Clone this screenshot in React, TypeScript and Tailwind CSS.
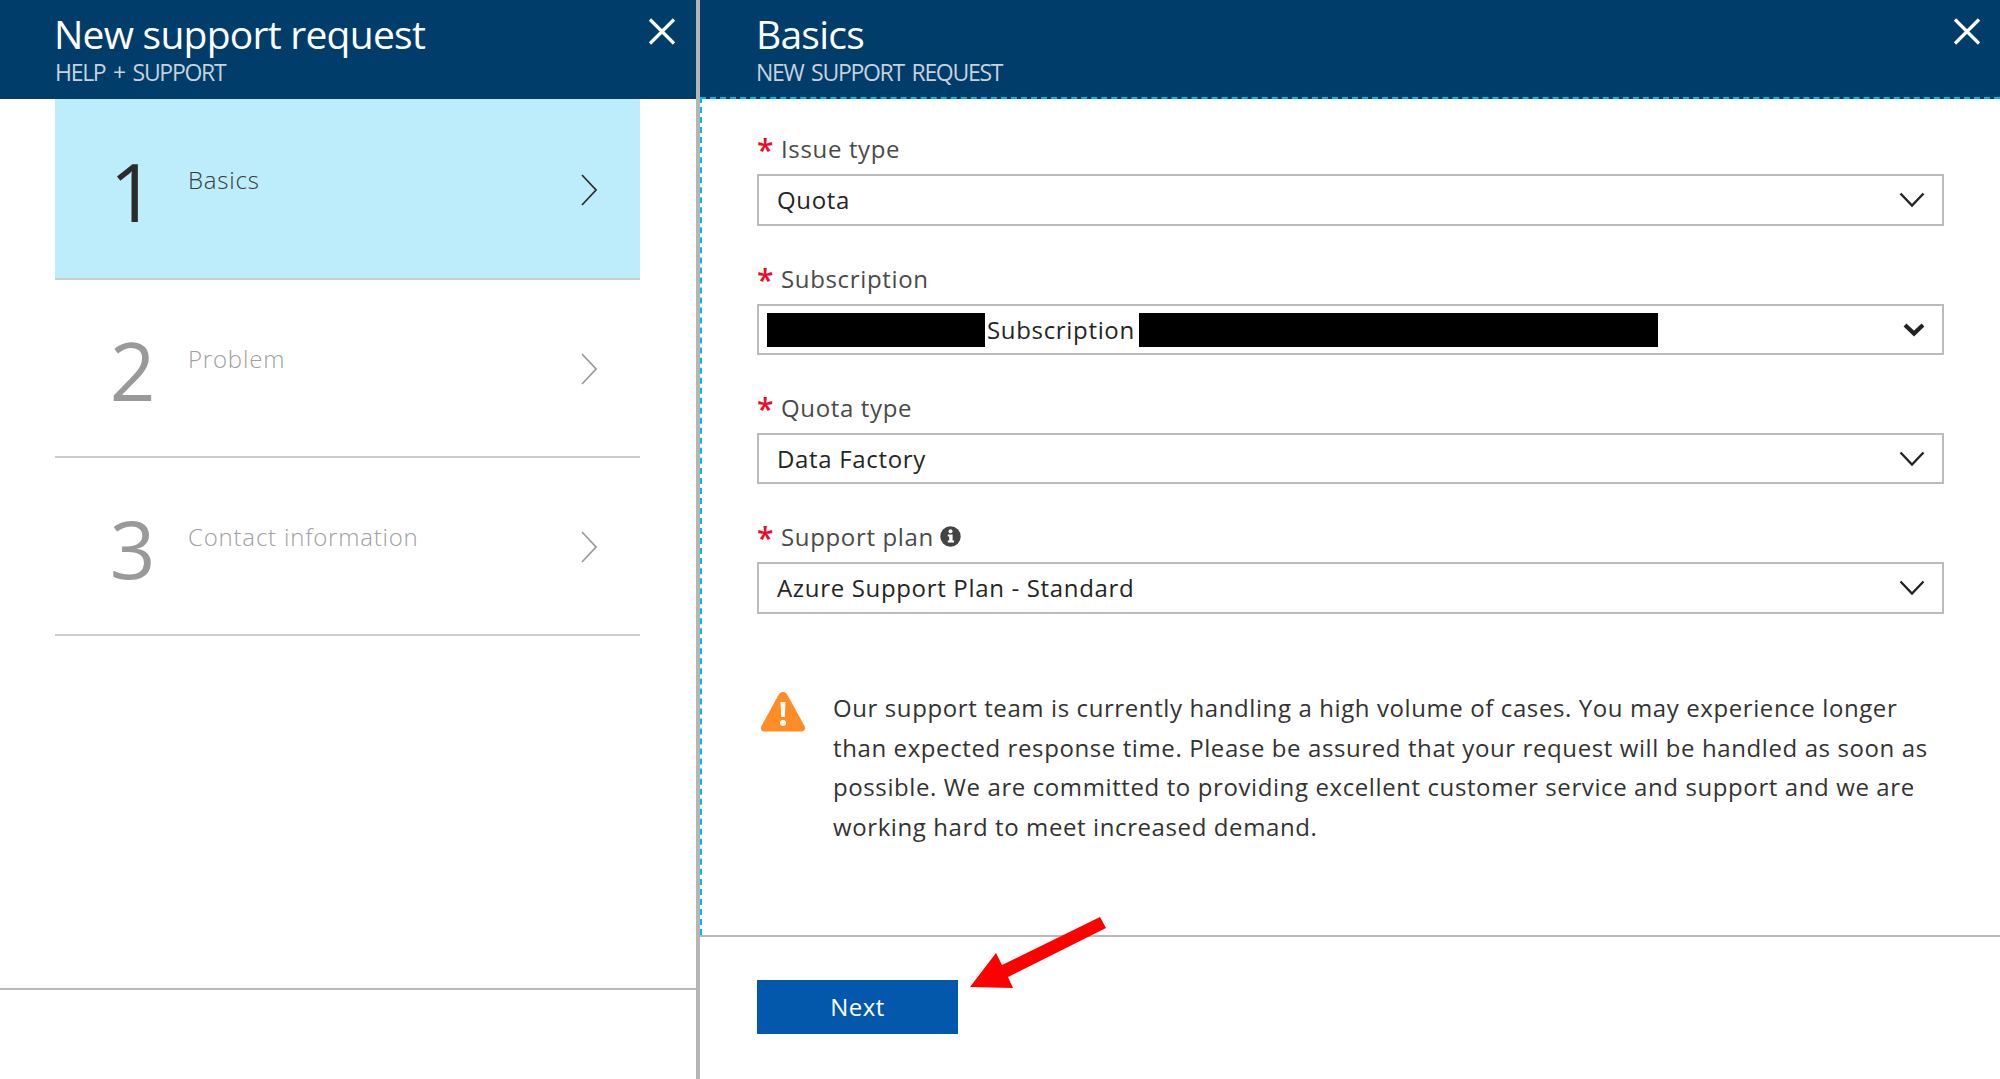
import React from "react";

const font = { fontFamily: '"Open Sans", "Noto Sans", sans-serif' };

function CloseIcon() {
  return (
    <svg width="28" height="27" viewBox="0 0 28 27" className="block">
      <path d="M2 1.500 L26 25.500 M26 1.500 L2 25.500" stroke="#ffffff" strokeWidth="3.2" fill="none" />
    </svg>
  );
}

function Header({ title, sub, narrow }: { title: string; sub: string; narrow?: boolean }) {
  return (
    <div className="relative h-[99px] shrink-0 bg-[#003d6b] text-white">
      <div className={`absolute top-[7px] ${narrow ? "left-[56px]" : "left-[54px]"} whitespace-nowrap text-[39px] leading-[54px] tracking-[-0.75px] font-normal`}>{title}</div>
      <div className={`absolute top-[56px] ${narrow ? "left-[56px]" : "left-[55px]"} whitespace-nowrap text-[23px] leading-[32px] tracking-[-1.3px] [word-spacing:3px] text-[#c6d2dc]`}>{sub}</div>
    </div>
  );
}

function Step({ n, label, active }: { n: string; label: string; active?: boolean }) {
  const c = active ? "#2b2b2b" : "#999999";
  return (
    <div className={`relative border-b-2 border-[#cccccc] ${active ? "h-[181px] bg-[#bdedfb]" : "h-[178px]"}`}>
      <div className="flex h-full">
        <div className="w-[31px] shrink-0" />
        <div className={`w-[93px] shrink-0 text-center text-[80px] leading-[100px] font-normal ${active ? "pt-[42px]" : "pt-[40px]"}`} style={{ color: c }}>{n}</div>
        <div className="w-[9px] shrink-0" />
        <div className={`flex-1 text-[24px] leading-[34px] tracking-[0.8px] font-light ${active ? "pt-[64px] text-[#3a3a3a]" : "pt-[62px] text-[#a0a0a0]"}`}>{label}</div>
        <div className={`w-[59px] shrink-0 ${active ? "pt-[75px]" : "pt-[73px]"}`}>
          <svg width="16" height="32" viewBox="0 0 16 32">
            <path d="M1 1 L15 16 L1 31" fill="none" stroke={c} strokeWidth="1.7" />
          </svg>
        </div>
      </div>
    </div>
  );
}

function Chevron({ bold }: { bold?: boolean }) {
  return bold ? (
    <svg width="22" height="15" viewBox="0 0 22 15">
      <path d="M2 3 L11 11.500 L20 3" fill="none" stroke="#222222" strokeWidth="4.2" />
    </svg>
  ) : (
    <svg width="26" height="16" viewBox="0 0 26 16">
      <path d="M1.500 1.500 L13 13.500 L24.500 1.500" fill="none" stroke="#222222" strokeWidth="2.3" />
    </svg>
  );
}

function Field({ label, children, info, bold, outer }: { label: string; children: React.ReactNode; info?: boolean; bold?: boolean; outer: string }) {
  return (
    <div className={outer}>
      <div className="mb-[7px] flex h-[36px] items-center">
        <span className="h-[28px] w-[24px] shrink-0 text-[30px] leading-[30px] text-[#ea0b2c] font-semibold">*</span>
        <span className="text-[24px] tracking-[0.65px] text-[#4a4a4a]">{label}</span>
        {info && (
          <svg width="21" height="21" viewBox="0 0 21 21" className="-mt-[2px] ml-[6px]">
            <circle cx="10.500" cy="10.500" r="10.200" fill="#444444" />
            <circle cx="10.500" cy="5.200" r="2" fill="#ffffff" />
            <path d="M7.800 8.500 H12.600 V14.600 H14 V16.600 H7.800 V14.600 H9.200 V10.500 H7.800 Z" fill="#ffffff" />
          </svg>
        )}
      </div>
      <div className="flex h-[calc(100%-43px)] items-center border-2 border-[#bbbbbb] pr-[17px]">
        <div className="flex flex-1 items-center whitespace-nowrap text-[24px] tracking-[0.67px] text-[#252525]">{children}</div>
        <Chevron bold={bold} />
      </div>
    </div>
  );
}

export default function App() {
  return (
    <div className="relative flex h-[1079px] w-[2000px] overflow-hidden bg-white" style={font}>
      {/* Left blade */}
      <div className="flex w-[696px] shrink-0 flex-col">
        <div className="relative">
          <Header title="New support request" sub="HELP + SUPPORT" />
          <div className="absolute right-[20px] top-[18px]"><CloseIcon /></div>
        </div>
        <div className="flex-1 pl-[55px] pr-[56px]">
          <Step n="1" label="Basics" active />
          <Step n="2" label="Problem" />
          <Step n="3" label="Contact information" />
        </div>
        <div className="h-[91px] shrink-0 border-t-2 border-[#b9b9b9]" />
      </div>

      <div className="w-[4px] shrink-0 bg-[#b5b5b5]" />

      {/* Right blade */}
      <div className="flex flex-1 flex-col">
        <div className="relative">
          <Header title="Basics" sub="NEW SUPPORT REQUEST" narrow />
          <div className="absolute right-[19px] top-[18px]"><CloseIcon /></div>
        </div>
        <div className="relative z-10 -mt-[2px] flex-1 border-l-2 border-t-2 border-dashed border-[#00b7f1] pl-[55px] pr-[56px] pt-[32px]">
          <Field label="Issue type" outer="mb-[35px] h-[95px]">
            <span className="pl-[18px]">Quota</span>
          </Field>
          <Field label="Subscription" bold outer="mb-[35px] h-[94px]">
            <div className="ml-[8px] h-[34px] w-[218px] bg-black" />
            <span className="ml-[2px] mr-[5px] w-[147px]">Subscription</span>
            <div className="h-[34px] w-[519px] bg-black" />
          </Field>
          <Field label="Quota type" outer="mb-[35px] h-[94px]">
            <span className="pl-[18px]">Data Factory</span>
          </Field>
          <Field label="Support plan" info outer="mb-[74px] h-[95px]">
            <span className="pl-[18px]">Azure Support Plan - Standard</span>
          </Field>
          <div className="flex pl-[3px]">
            <svg width="46" height="41" viewBox="0 0 46 41" className="mt-[3px] shrink-0">
              <path d="M23 1 C20.500 1 19.500 2.500 18.500 4 L1.500 35 C0 38 1.500 40.500 4.500 40.500 H41.500 C44.500 40.500 46 38 44.500 35 L27.500 4 C26.500 2.500 25.500 1 23 1 Z" fill="#ff8c26" />
              <path d="M20.500 11 H25.500 L24.800 26 H21.200 Z" fill="#ffffff" />
              <circle cx="23" cy="32" r="3" fill="#ffffff" />
            </svg>
            <p className="ml-[27px] whitespace-nowrap text-[24px] leading-[39.5px] tracking-[0.6px] text-[#333333]">
              Our support team is currently handling a high volume of cases. You may experience longer
              <br />
              than expected response time. Please be assured that your request will be handled as soon as
              <br />
              possible. We are committed to providing excellent customer service and support and we are
              <br />
              working hard to meet increased demand.
            </p>
          </div>
        </div>
        <div className="h-[144px] shrink-0 border-t-2 border-[#b9b9b9] pl-[57px] pt-[43px]">
          <div className="flex h-[54px] w-[201px] items-center justify-center bg-[#0458ab] text-[24px] tracking-[0.5px] text-white">Next</div>
        </div>
      </div>

      {/* Annotation arrow */}
      <svg className="absolute left-[960px] top-[910px] z-20" width="160" height="90" viewBox="960 910 160 90">
        <path d="M970 987 L996 953 L1002 965 L1100 917 L1106 928 L1008 977 L1013 988 Z" fill="#ff0000" />
      </svg>
    </div>
  );
}
